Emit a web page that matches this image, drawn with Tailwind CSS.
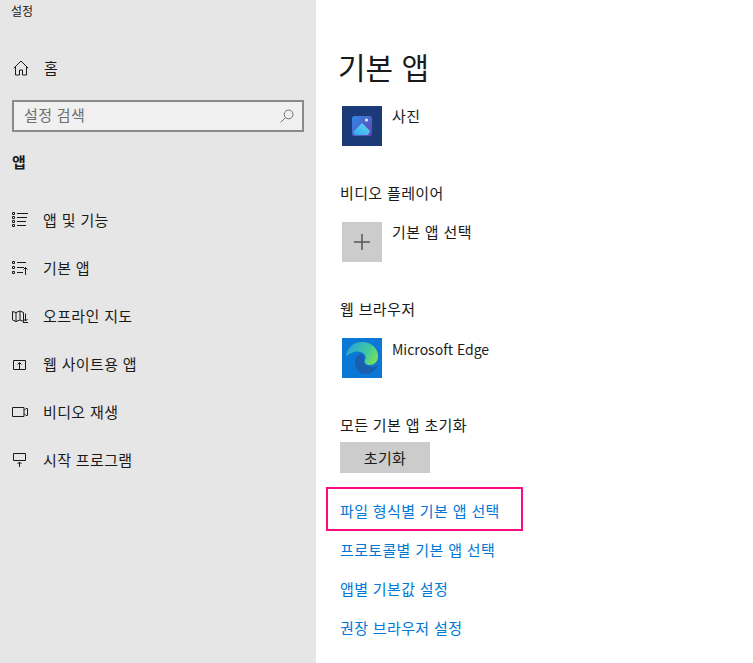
<!DOCTYPE html>
<html lang="ko">
<head>
  <meta charset="UTF-8">
  <title>설정</title>
  <script src="https://cdn.jsdelivr.net/npm/@tailwindcss/browser@4"></script>
</head>
<body class="bg-white text-[#1a1a1a] font-['Noto_Sans_CJK_KR','Noto_Sans',sans-serif]">
  <div class="relative flex h-[663px] w-[753px] overflow-hidden">

    <!-- sidebar -->
    <aside class="flex h-full w-[316px] shrink-0 flex-col bg-[#e6e6e6]">
      <div class="flex h-[22px] items-center pl-[11px] text-[12px] leading-none">설정</div>

      <a class="mt-[22px] flex h-[48px] items-center">
        <svg class="ml-[13px] h-[16px] w-[16px]" viewBox="0 0 16 16" fill="none" stroke="#1a1a1a" stroke-width="1"><path d="M0.8 8.200 8 1l7.200 7.200M2.500 6.800v8.200h4v-5h3v5h4V6.800"/></svg>
        <span class="ml-[15px] pb-[2px] text-[15px] leading-none tracking-[0.35px]">홈</span>
      </a>

      <div class="mx-[12px] mt-[8px] flex h-[32px] items-center justify-between border-2 border-[#8a8a8a] bg-[#f0f0f0] pl-[10px] pr-[8px]">
        <span class="pb-[3px] text-[15px] leading-none tracking-[0.35px] text-[#6e6e6e]">설정 검색</span>
        <svg class="h-[14px] w-[14px]" viewBox="0 0 14 14" fill="none" stroke="#6e6e6e" stroke-width="1"><circle cx="8.600" cy="5.400" r="4.400"/><path d="M5.400 8.600 0.600 13.400"/></svg>
      </div>

      <div class="mt-[16px] flex h-[28px] items-center pb-[2px] pl-[12px] text-[15px] font-bold leading-none">앱</div>

      <nav class="mt-[20px] flex flex-col text-[15px] tracking-[0.35px]">
        <a class="flex h-[48px] items-center">
          <svg class="ml-[12px] h-[16px] w-[16px]" viewBox="0 0 16 16" fill="none" stroke="#1a1a1a" stroke-width="1"><path d="M.5.500h2v2h-2zM.5 4.500h2v2h-2zM.5 8.500h2v2h-2zM.5 12.500h2v2h-2zM5 1.500h11M5 5.500h10M5 9.500h9M5 13.500h9"/></svg>
          <span class="ml-[15px] pb-[2px] leading-none">앱 및 기능</span>
        </a>
        <a class="flex h-[48px] items-center">
          <svg class="ml-[12px] h-[16px] w-[16px]" viewBox="0 0 16 16" fill="none" stroke="#1a1a1a" stroke-width="1"><path d="M.5 1.500h2v2h-2zM.5 6.500h2v2h-2zM.5 11.500h2v2h-2zM5 2.500h9M5 7.500h7M5 12.500h6M13.500 15V7.500M11.500 9.500l2-2 2 2"/></svg>
          <span class="ml-[15px] pb-[2px] leading-none">기본 앱</span>
        </a>
        <a class="flex h-[48px] items-center">
          <svg class="ml-[12px] h-[16px] w-[16px]" viewBox="0 0 16 16" fill="none" stroke="#1a1a1a" stroke-width="1"><path d="M11.500 13.500l-3.500-1.500-4 1.500L.5 12V3.500l3.500 1 4-1.500 3.500 1.500v9zM4 4.500v9M8 3v9M13.500 5.500v7.500M11.500 11l2 2 2-2M11 14.500h5"/></svg>
          <span class="ml-[15px] pb-[2px] leading-none">오프라인 지도</span>
        </a>
        <a class="flex h-[48px] items-center">
          <svg class="ml-[12px] h-[16px] w-[16px]" viewBox="0 0 16 16" fill="none" stroke="#1a1a1a" stroke-width="1"><path d="M1.500 4.500h12v9h-12zM7.500 14V6.500M5.500 8.500l2-2 2 2"/></svg>
          <span class="ml-[15px] pb-[2px] leading-none">웹 사이트용 앱</span>
        </a>
        <a class="flex h-[48px] items-center">
          <svg class="ml-[12px] h-[16px] w-[16px]" viewBox="0 0 16 16" fill="none" stroke="#1a1a1a" stroke-width="1"><path d="M.5 3.500h11.500v9H.5zM12 6.500l2-2h1.500v7H14l-2-2"/></svg>
          <span class="ml-[15px] pb-[2px] leading-none">비디오 재생</span>
        </a>
        <a class="flex h-[48px] items-center">
          <svg class="ml-[12px] h-[16px] w-[16px]" viewBox="0 0 16 16" fill="none" stroke="#1a1a1a" stroke-width="1"><path d="M1.500 1.500h12v7h-12zM7.500 15v-5M5.500 12l2-2 2 2"/></svg>
          <span class="ml-[15px] pb-[2px] leading-none">시작 프로그램</span>
        </a>
      </nav>
    </aside>

    <!-- main -->
    <main class="flex-1 pl-[24px] pt-[46px] text-[15px] tracking-[0.35px]">
      <h1 class="-ml-[2px] h-[40px] text-[30px] font-normal leading-[40px] tracking-normal">기본 앱</h1>

      <div class="mt-[20px] ml-[2px] flex">
        <div class="flex h-[40px] w-[40px] items-center justify-center bg-[#1a3a78]">
          <svg class="h-[20px] w-[20px]" viewBox="0 0 20 20">
            <defs>
              <linearGradient id="ph" x1="0" y1="0" x2="1" y2="1"><stop offset="0" stop-color="#2f8ae6"/><stop offset="1" stop-color="#6b3fb0"/></linearGradient>
              <linearGradient id="mt" x1="0" y1="1" x2="1" y2="0"><stop offset="0" stop-color="#2fa8ee"/><stop offset="1" stop-color="#66d8f6"/></linearGradient>
            </defs>
            <rect width="20" height="20" rx="2.500" fill="url(#ph)"/>
            <path d="M1 16 10 7l8 8-2 4H3z" fill="url(#mt)"/>
            <circle cx="14.500" cy="4" r="1.500" fill="#e8ecff"/>
          </svg>
        </div>
        <span class="ml-[10px] leading-[20px]">사진</span>
      </div>

      <h2 class="mt-[37px] font-normal leading-[20px]">비디오 플레이어</h2>
      <div class="mt-[19px] ml-[2px] flex">
        <div class="flex h-[40px] w-[40px] items-center justify-center bg-[#cccccc]">
          <svg class="h-[18px] w-[18px]" viewBox="0 0 18 18" stroke="#555" stroke-width="1.500"><path d="M9 1v16M1 9h16"/></svg>
        </div>
        <span class="ml-[10px] leading-[20px]">기본 앱 선택</span>
      </div>

      <h2 class="mt-[37px] font-normal leading-[20px]">웹 브라우저</h2>
      <div class="mt-[19px] ml-[2px] flex">
        <div class="h-[40px] w-[40px] bg-[#0a78d4]">
          <svg class="h-[40px] w-[40px]" viewBox="0 0 40 40">
            <defs>
              <linearGradient id="eg" x1="0" y1="0.300" x2="1" y2="0.700"><stop offset="0" stop-color="#2aa5d8"/><stop offset="0.600" stop-color="#3ec8a0"/><stop offset="1" stop-color="#7ee05a"/></linearGradient>
            </defs>
            <path d="M4 19C5 10 11 4 20 4c9 0 16 6 16 14 0 6-4 9-8 9-4 0-6-2-5-5 1-2 1-4-1-6-3-3-9-3-12-1-3 1-5 2-6 4z" fill="url(#eg)"/>
            <path d="M13 24c0-4 2-7 6-8 3 0 4 2 3 5-1 4 2 8 8 8 2 0 4-1 6-2-1 5-7 9-13 9-6 0-10-6-10-12z" fill="#1a5fae"/>
          </svg>
        </div>
        <span class="ml-[10px] mt-[1px] text-[14px] leading-[20px] tracking-normal">Microsoft Edge</span>
      </div>

      <h2 class="mt-[37px] font-normal leading-[20px]">모든 기본 앱 초기화</h2>
      <button class="mt-[7px] block h-[31px] w-[90px] bg-[#cccccc] pb-[1px] leading-none">초기화</button>

      <div class="mt-[28px] flex flex-col gap-[19px] leading-[20px] text-[#0078d7]">
        <a>파일 형식별 기본 앱 선택</a>
        <a>프로토콜별 기본 앱 선택</a>
        <a>앱별 기본값 설정</a>
        <a>권장 브라우저 설정</a>
      </div>
    </main>

    <!-- highlight box -->
    <div class="absolute left-[326px] top-[487px] h-[44px] w-[197px] border-2 border-[#ff0a82]"></div>
  </div>
</body>
</html>
